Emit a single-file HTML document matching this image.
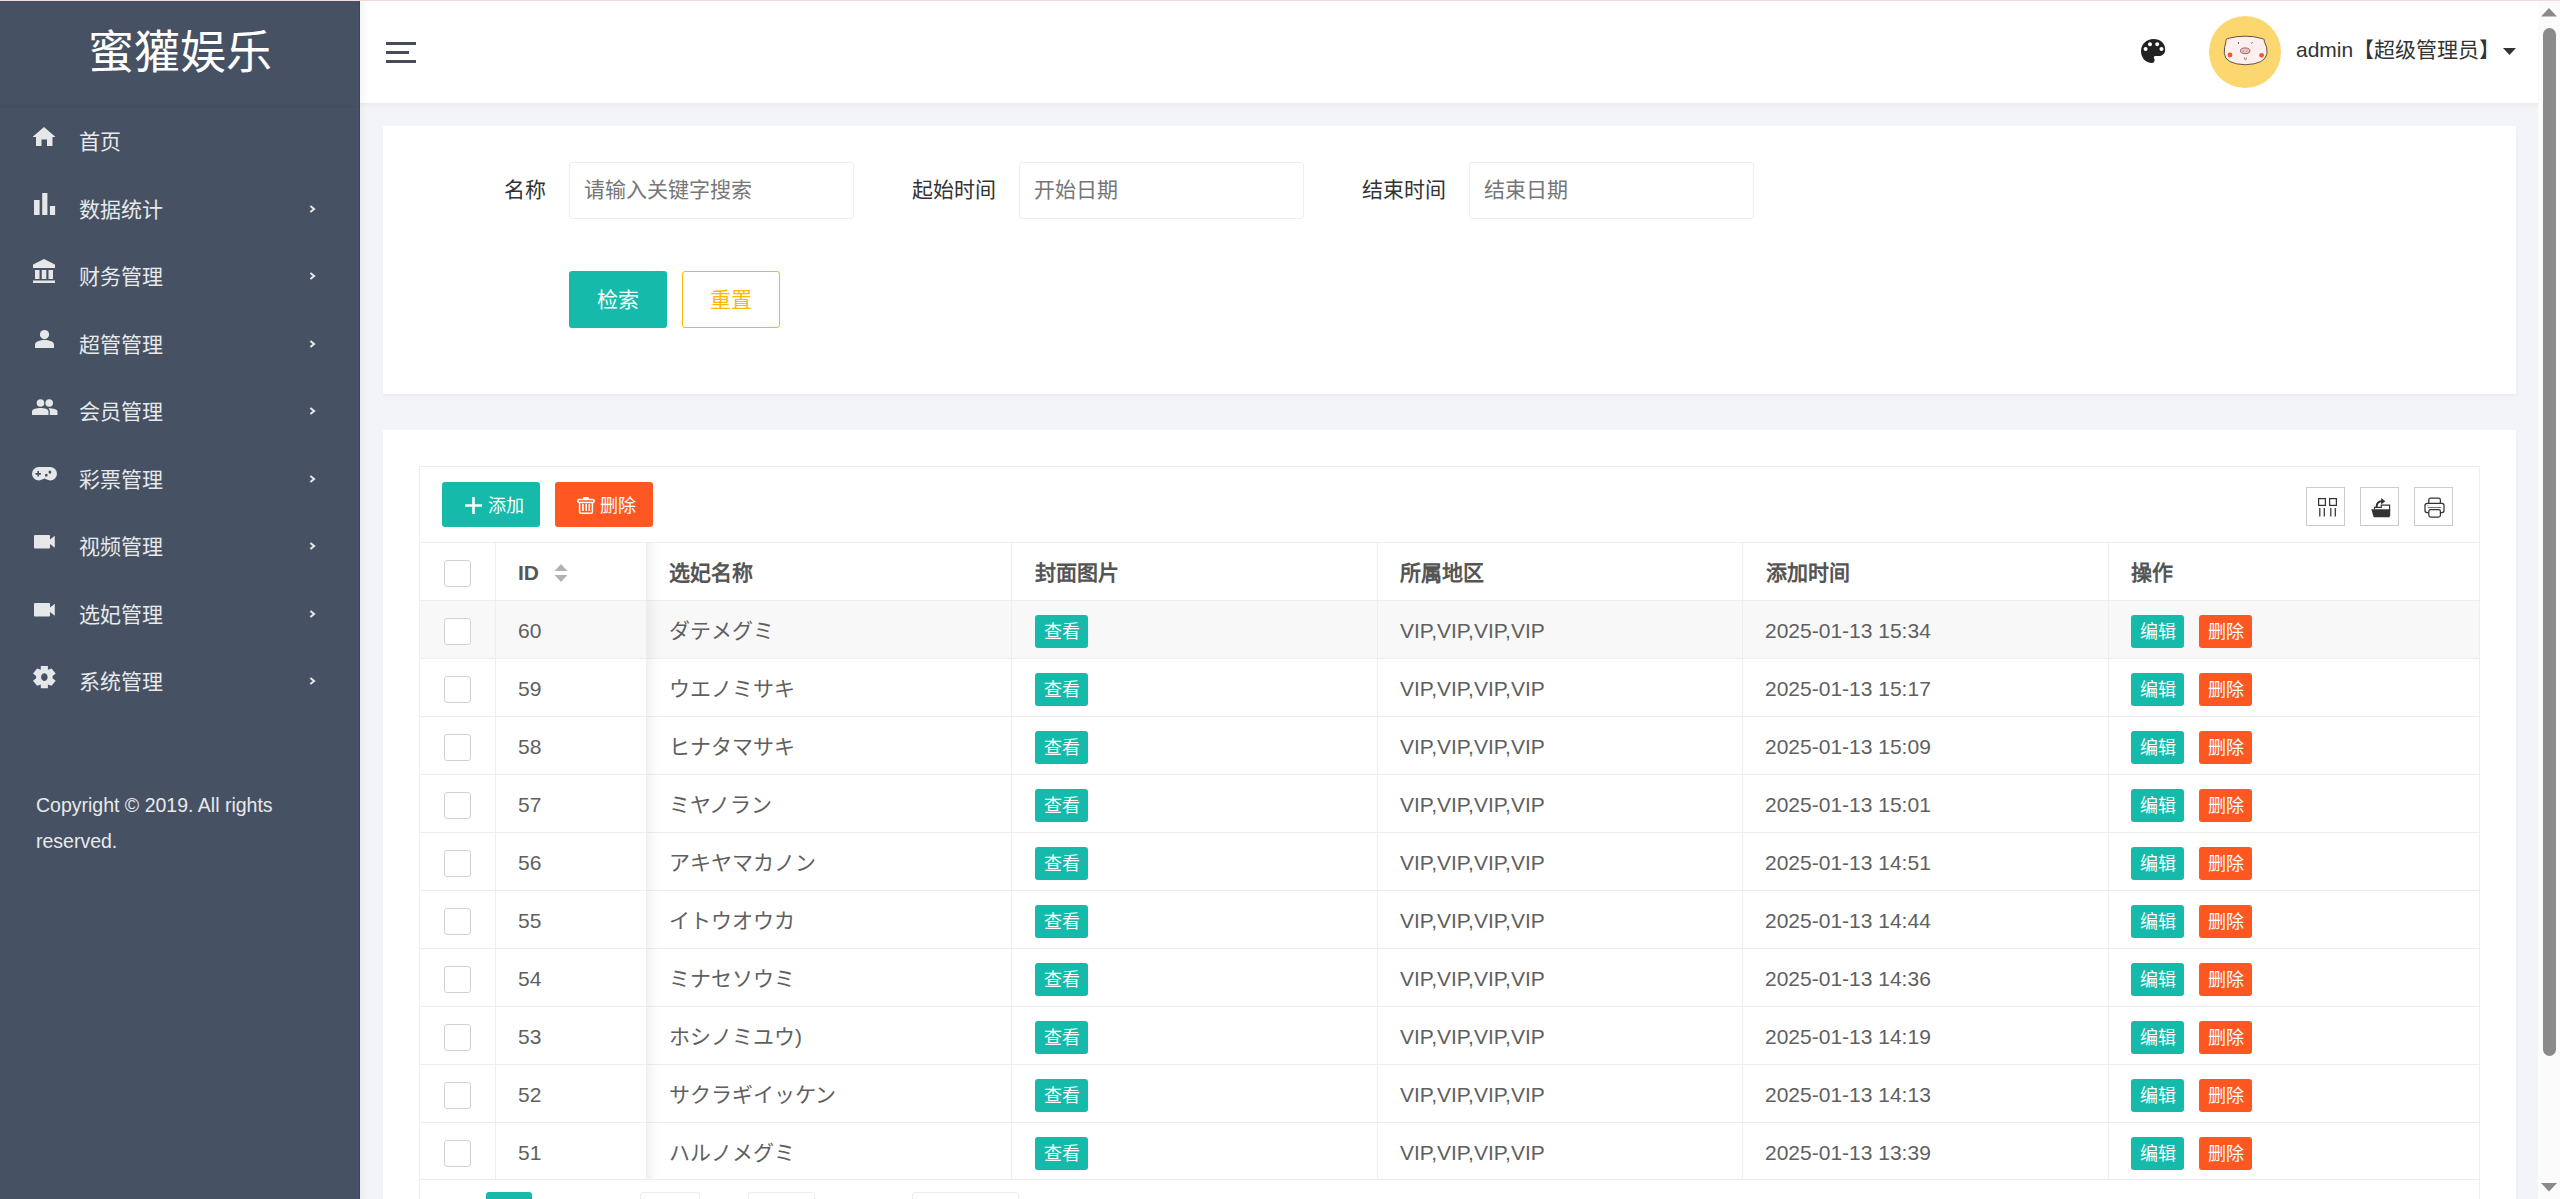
<!DOCTYPE html>
<html lang="zh-CN">
<head>
<meta charset="utf-8">
<title>蜜獾娱乐</title>
<style>
*{box-sizing:border-box;margin:0;padding:0}
html,body{width:2560px;height:1199px;overflow:hidden;background:#f2f4f8;font-family:"Liberation Sans",sans-serif;color:#333}
.abs{position:absolute}
.tx{font-size:21px;line-height:32px;color:#e8e9eb;white-space:nowrap}
.lbl{position:absolute;font-size:21px;line-height:30px;color:#333;white-space:nowrap}
.inp{position:absolute;width:285px;height:57px;border:1.5px solid #eee;border-radius:3px;background:#fff}
.inp span{position:absolute;left:14px;top:11.5px;font-size:21px;line-height:30px;color:#767676;white-space:nowrap}
.btn{position:absolute;height:57px;width:98px;border-radius:3px;text-align:center;font-size:21px;line-height:57px;color:#fff}
.tool{width:39px;height:39px;border:1.5px solid #ccc}
.th{height:57px;font-size:21px;line-height:59px;color:#555;font-weight:bold;white-space:nowrap}
.td{height:57px;font-size:21px;line-height:59px;color:#5f5f5f;white-space:nowrap}
.cb{width:27px;height:27px;border:1.5px solid #d2d2d2;border-radius:3px;background:#fff}
.sbtn{height:33px;width:53px;border-radius:3px;font-size:18px;line-height:35px;text-align:center;color:#fff}
</style>
</head>
<body>
<div class="abs" style="left:0;top:0;width:2560px;height:1px;background:#f2dadd;z-index:5"></div>
<!-- sidebar -->
<div class="abs" style="left:0;top:1px;width:360px;height:1198px;background:#465263;box-shadow:inset -1px 0 0 #3b4656"></div>
<div class="abs" style="left:0;top:106px;width:359px;height:1px;background:rgba(0,0,0,0.05)"></div>
<div class="abs" style="left:0;top:22px;width:360px;text-align:center;color:#fff;font-size:46px;line-height:60px">蜜獾娱乐</div>
<svg class="abs" style="left:31px;top:126.0px;width:26px;height:22px;overflow:visible" viewBox="0 0 26 22" fill="#e6e7e9"><path d="M11 0 L22.5 10 H19.5 V19 H14 V12.5 H8.5 V19 H3 V10 H-0.5 Z" transform="translate(2,1)"/></svg>
<div class="abs tx" style="left:79px;top:126.0px">首页</div>
<svg class="abs" style="left:33.8px;top:192.6px;width:22px;height:22px;overflow:visible" viewBox="0 0 22 22" fill="#e6e7e9"><path d="M0 7h5.6v15H0zM8.2 0h5.2v22H8.2zM15.9 13h5.2v9h-5.2z"/></svg>
<div class="abs tx" style="left:79px;top:193.5px">数据统计</div>
<svg class="abs" style="left:308px;top:203.5px;width:10px;height:12px" viewBox="0 0 10 12"><path d="M2.4 1.9 L6.1 5 L2.4 8.1" fill="none" stroke="#e6e7e9" stroke-width="2"/></svg>
<svg class="abs" style="left:31px;top:258.8px;width:26px;height:26px;overflow:visible" viewBox="0 0 26 26" fill="#e6e7e9"><path d="M11 0 L22 5.5 V9 H0 V5.5 Z M2 11h4.5v9H2z M8.8 11h4.5v9H8.8z M15.5 11h4.5v9h-4.5z M0 21.5h22V24H0z" transform="translate(2,0)"/></svg>
<div class="abs tx" style="left:79px;top:261.0px">财务管理</div>
<svg class="abs" style="left:308px;top:271.0px;width:10px;height:12px" viewBox="0 0 10 12"><path d="M2.4 1.9 L6.1 5 L2.4 8.1" fill="none" stroke="#e6e7e9" stroke-width="2"/></svg>
<svg class="abs" style="left:35px;top:330.0px;width:20px;height:19px;overflow:visible" viewBox="0 0 20 19" fill="#e6e7e9"><circle cx="9.5" cy="4.6" r="4.6"/><path d="M0 18 V14.5 C0 11.5 5 10 9.5 10 C14 10 19 11.5 19 14.5 V18 Z"/></svg>
<div class="abs tx" style="left:79px;top:328.5px">超管管理</div>
<svg class="abs" style="left:308px;top:338.5px;width:10px;height:12px" viewBox="0 0 10 12"><path d="M2.4 1.9 L6.1 5 L2.4 8.1" fill="none" stroke="#e6e7e9" stroke-width="2"/></svg>
<svg class="abs" style="left:31.6px;top:398.5px;width:26px;height:17px;overflow:visible" viewBox="0 0 26 17" fill="#e6e7e9"><circle cx="8.5" cy="4" r="3.8"/><circle cx="17.2" cy="4" r="3.8"/><path d="M0 16 V12.5 C0 10 4.5 9 8.5 9 C12.5 9 16.5 10 16.5 12.5 V16 Z M17.8 16 V12.5 C17.8 11 17.2 10 16.5 9.2 C21 9.2 25.5 10.2 25.5 12.5 V16 Z"/></svg>
<div class="abs tx" style="left:79px;top:396.0px">会员管理</div>
<svg class="abs" style="left:308px;top:406.0px;width:10px;height:12px" viewBox="0 0 10 12"><path d="M2.4 1.9 L6.1 5 L2.4 8.1" fill="none" stroke="#e6e7e9" stroke-width="2"/></svg>
<svg class="abs" style="left:32px;top:466.8px;width:26px;height:15px;overflow:visible" viewBox="0 0 26 15" fill="#e6e7e9"><path fill-rule="evenodd" d="M6.8 0 H18.2 A6.8 6.8 0 0 1 18.2 13.6 C16.5 13.6 14.8 12.4 12.5 11.6 C10.2 12.4 8.5 13.6 6.8 13.6 A6.8 6.8 0 0 1 6.8 0 Z M5.4 4.1 V6.1 H3.5 V7.7 H5.4 V9.6 H7 V7.7 H8.9 V6.1 H7 V4.1 Z M17.9 3.5 a1.4 1.6 0 1 0 0.01 0 Z M14.3 6.8 a1.4 1.4 0 1 0 0.01 0 Z"/></svg>
<div class="abs tx" style="left:79px;top:463.5px">彩票管理</div>
<svg class="abs" style="left:308px;top:473.5px;width:10px;height:12px" viewBox="0 0 10 12"><path d="M2.4 1.9 L6.1 5 L2.4 8.1" fill="none" stroke="#e6e7e9" stroke-width="2"/></svg>
<svg class="abs" style="left:34.2px;top:535.2px;width:22px;height:15px;overflow:visible" viewBox="0 0 22 15" fill="#e6e7e9"><path d="M0 1 Q0 0 1 0 H15 Q16 0 16 1 V4.5 L20.8 0.8 V12.7 L16 9 V12.5 Q16 13.5 15 13.5 H1 Q0 13.5 0 12.5 Z"/></svg>
<div class="abs tx" style="left:79px;top:531.0px">视频管理</div>
<svg class="abs" style="left:308px;top:541.0px;width:10px;height:12px" viewBox="0 0 10 12"><path d="M2.4 1.9 L6.1 5 L2.4 8.1" fill="none" stroke="#e6e7e9" stroke-width="2"/></svg>
<svg class="abs" style="left:34.2px;top:602.7px;width:22px;height:15px;overflow:visible" viewBox="0 0 22 15" fill="#e6e7e9"><path d="M0 1 Q0 0 1 0 H15 Q16 0 16 1 V4.5 L20.8 0.8 V12.7 L16 9 V12.5 Q16 13.5 15 13.5 H1 Q0 13.5 0 12.5 Z"/></svg>
<div class="abs tx" style="left:79px;top:598.5px">选妃管理</div>
<svg class="abs" style="left:308px;top:608.5px;width:10px;height:12px" viewBox="0 0 10 12"><path d="M2.4 1.9 L6.1 5 L2.4 8.1" fill="none" stroke="#e6e7e9" stroke-width="2"/></svg>
<svg class="abs" style="left:33px;top:665.7px;width:23px;height:23px;overflow:visible" viewBox="0 0 23 23" fill="#e6e7e9"><path fill-rule="evenodd" d="M7.8 0 H14.9 V3.8 L18.6 2.6 L22.7 7.5 L19.6 10 V12.3 L22.7 14.8 L18.6 19.7 L14.9 18.5 V22.3 H7.8 V18.5 L4.1 19.7 L0 14.8 L3.1 12.3 V10 L0 7.5 L4.1 2.6 L7.8 3.8 Z M11.35 7.35 A3.3 3.8 0 1 0 11.36 7.35 Z"/></svg>
<div class="abs tx" style="left:79px;top:666.0px">系统管理</div>
<svg class="abs" style="left:308px;top:676.0px;width:10px;height:12px" viewBox="0 0 10 12"><path d="M2.4 1.9 L6.1 5 L2.4 8.1" fill="none" stroke="#e6e7e9" stroke-width="2"/></svg>
<div class="abs" style="left:36px;top:787px;width:300px;font-size:19.5px;line-height:36px;color:#e8e9eb">Copyright © 2019. All rights reserved.</div>
<!-- header -->
<div class="abs" style="left:360px;top:1px;width:2178px;height:102px;background:#fff"></div>
<div class="abs" style="left:360px;top:1px;width:8px;height:102px;background:linear-gradient(to right,rgba(0,0,0,0.04),rgba(0,0,0,0))"></div>
<div class="abs" style="left:386px;top:42px;width:30px;height:3px;background:#464c57"></div>
<div class="abs" style="left:386px;top:51px;width:23px;height:3px;background:#464c57"></div>
<div class="abs" style="left:386px;top:60px;width:30px;height:3px;background:#464c57"></div>
<svg class="abs" style="left:2141px;top:39px;width:25px;height:24px" viewBox="0 0 25 24">
<path fill="#222" fill-rule="evenodd" d="M12.5 0 C19.5 0 24.5 4.5 24.2 11 C24 14.5 21.5 17 18 17 H14.5 C13 17 12.4 18.4 13.2 19.6 C14.2 21.2 13.5 24 11 24 C4.8 24 0 19 0 12 C0 5.2 5.5 0 12.5 0 Z M9 3.2 a2 2 0 1 0 0.01 0 Z M16.2 3.2 a2 2 0 1 0 0.01 0 Z M4.6 8 a2 2 0 1 0 0.01 0 Z M20.5 8 a2 2 0 1 0 0.01 0 Z"/>
</svg>
<svg class="abs" style="left:2209px;top:16px;width:72px;height:72px" viewBox="0 0 72 72">
<circle cx="36" cy="36" r="36" fill="#fcd770"/>
<path d="M17 25.8 Q16.3 22.3 20.3 22.2 Q27 20.2 36.2 20.2 Q45.5 20.2 51.8 22.3 Q55.8 22.2 55.4 25.6 Q58.6 31 58 37.5 Q56.5 48 36.2 48.8 Q16 48 15.3 37.5 Q15 31 17 25.8 Z" fill="#fcefee" stroke="#3a2a2a" stroke-width="0.8"/>
<path d="M18 24.5 Q18.5 23 20.5 23.3" fill="none" stroke="#f4c4c4" stroke-width="1"/>
<path d="M54.5 24.5 Q54 23 52 23.3" fill="none" stroke="#f4c4c4" stroke-width="1"/>
<circle cx="21" cy="39" r="2.4" fill="#f0592b"/>
<circle cx="52.6" cy="39.3" r="2.4" fill="#f0592b"/>
<ellipse cx="36.2" cy="34.8" rx="4.7" ry="2.9" fill="#f4bcbc" stroke="#3a2a2a" stroke-width="0.6"/>
<circle cx="34.6" cy="34.9" r="0.5" fill="#9a6a6a"/><circle cx="37.8" cy="34.9" r="0.5" fill="#9a6a6a"/>
<path d="M29.5 26.2 v1.6 M43.4 26.2 l-0.9 1.3" stroke="#333" stroke-width="0.9"/>
<path d="M35.4 41.5 Q35.6 44.2 36.4 44 Q37.2 44.2 37.4 41.5" fill="none" stroke="#333" stroke-width="0.55"/>
</svg>
<div class="abs" style="left:2296px;top:35px;font-size:21px;line-height:30px;color:#333;white-space:nowrap">admin【超级管理员】</div>
<svg class="abs" style="left:2503px;top:48px;width:13px;height:7px" viewBox="0 0 13 7"><path d="M0 0 H13 L6.5 7 Z" fill="#333"/></svg>
<!-- search card -->
<div class="abs" style="left:360px;top:103px;width:2178px;height:5px;background:linear-gradient(to bottom,rgba(0,0,0,0.035),rgba(0,0,0,0))"></div>
<div class="abs" style="left:360px;top:103px;width:7px;height:1096px;background:linear-gradient(to right,rgba(0,0,0,0.035),rgba(0,0,0,0))"></div>
<div class="abs" style="left:383px;top:126px;width:2133px;height:268px;background:#fff;box-shadow:0 1.5px 3px rgba(0,0,0,0.05)"></div>
<div class="lbl" style="left:504px;top:175px">名称</div>
<div class="inp" style="left:569px;top:162px"><span>请输入关键字搜索</span></div>
<div class="lbl" style="left:912px;top:175px">起始时间</div>
<div class="inp" style="left:1019px;top:162px"><span>开始日期</span></div>
<div class="lbl" style="left:1362px;top:175px">结束时间</div>
<div class="inp" style="left:1469px;top:162px"><span>结束日期</span></div>
<div class="btn" style="left:569px;top:271px;background:#16baaa">检索</div>
<div class="btn" style="left:682px;top:271px;background:#fff;border:1.5px solid #ffb800;color:#ffb800;line-height:56px">重置</div>
<!-- table card -->
<div class="abs" style="left:383px;top:430px;width:2133px;height:800px;background:#fff;box-shadow:0 1.5px 3px rgba(0,0,0,0.05)"></div>
<div class="abs" style="left:419px;top:466px;width:2061px;height:800px;border:1px solid #eee"></div>
<div class="abs" style="left:442px;top:482px;width:98px;height:45px;background:#16baaa;border-radius:3px"></div>
<svg class="abs" style="left:465px;top:497px;width:17px;height:17px" viewBox="0 0 17 17"><path d="M8.5 0v17M0 8.5h17" stroke="#fff" stroke-width="2.6"/></svg>
<div class="abs" style="left:488px;top:490.5px;font-size:18px;line-height:30px;color:#fff">添加</div>
<div class="abs" style="left:555px;top:482px;width:98px;height:45px;background:#ff5722;border-radius:3px"></div>
<svg class="abs" style="left:577px;top:497px;width:18px;height:17px" viewBox="0 0 18 17"><rect x="6" y="0.1" width="6" height="2.6" rx="1" fill="#fff"/><rect x="0.8" y="2.4" width="16.4" height="3" rx="1.5" fill="none" stroke="#fff" stroke-width="1.5"/><path d="M2.6 5.2 V14.8 Q2.6 16.3 4.1 16.3 H13.9 Q15.4 16.3 15.4 14.8 V5.2" fill="none" stroke="#fff" stroke-width="1.5"/><path d="M5.1 7h1.6v7H5.1zM8.4 7h1.6v7H8.4zM11.5 7h1.6v7h-1.6z" fill="#fff"/></svg>
<div class="abs" style="left:600px;top:490.5px;font-size:18px;line-height:30px;color:#fff">删除</div>

<div class="abs tool" style="left:2306px;top:487px"></div>
<div class="abs tool" style="left:2360px;top:487px"></div>
<div class="abs tool" style="left:2414px;top:487px"></div>
<svg class="abs" style="left:2317px;top:497px;width:20px;height:21px" viewBox="0 0 20 21" fill="none" stroke="#333" stroke-width="1.25">
<rect x="1.6" y="1.6" width="6.8" height="6.8"/><rect x="12.6" y="1.6" width="6.8" height="6.8"/>
<path d="M2.8 11v8.4M7.3 11v8.4M13.8 11v8.4M18.3 11v8.4"/>
</svg>
<svg class="abs" style="left:2371px;top:497px;width:21px;height:21px" viewBox="0 0 21 21">
<path d="M0.3 12.2 H19.2 L18.6 20.2 H2.7 Z" fill="#333"/>
<path d="M3.5 12.2 V10.3 H10.3 V8.2 H18.6 V19" fill="none" stroke="#333" stroke-width="1.2"/>
<path d="M5.6 10 C5.6 6 8 4.2 11 4.2" fill="none" stroke="#333" stroke-width="1.9"/>
<path d="M10.2 1 L14.3 4.2 L10.2 7.4 Z" fill="#333"/>
</svg>
<svg class="abs" style="left:2424px;top:497px;width:21px;height:21px" viewBox="0 0 21 21" fill="none" stroke="#333" stroke-width="1.25">
<path d="M4.8 6.4 V3 Q4.8 1.2 6.6 1.2 H14.6 Q16.4 1.2 16.4 3 V6.4"/>
<path d="M4.8 15.5 H3 Q1 15.5 1 13.5 V8.6 Q1 6.4 3.2 6.4 H18 Q20 6.4 20 8.6 V13.5 Q20 15.5 18 15.5 H16.4"/>
<rect x="4.8" y="12.6" width="11.6" height="7.4" rx="1.8"/>
<path d="M3.8 10.5 H16.8" stroke-width="0.7"/>
<path d="M2.8 8.7 H5.3" stroke-width="0.6" stroke="#6a9ad8"/>
</svg>

<div class="abs" style="left:419px;top:542px;width:2061px;height:1px;background:#eee"></div>
<div class="abs cb" style="left:444px;top:560px"></div>
<div class="abs th" style="left:518px;top:543px">ID</div>
<svg class="abs" style="left:554px;top:564px;width:14px;height:18px" viewBox="0 0 14 18" fill="#b2b2b2"><path d="M7 0 L13.5 7 H0.5 Z M0.5 11 H13.5 L7 18 Z"/></svg>
<div class="abs th" style="left:669px;top:543px">选妃名称</div>
<div class="abs th" style="left:1035px;top:543px">封面图片</div>
<div class="abs th" style="left:1400px;top:543px">所属地区</div>
<div class="abs th" style="left:1766px;top:543px">添加时间</div>
<div class="abs th" style="left:2131px;top:543px">操作</div>
<div class="abs" style="left:419px;top:600px;width:2061px;height:1px;background:#eee"></div>
<div class="abs" style="left:420px;top:601px;width:2059px;height:57px;background:#f8f8f8"></div>
<div class="abs" style="left:419px;top:658px;width:2061px;height:1px;background:#eee"></div>
<div class="abs cb" style="left:444px;top:618px"></div>
<div class="abs td" style="left:518px;top:601px">60</div>
<div class="abs td jp" style="left:669px;top:601px">ダテメグミ</div>
<div class="abs sbtn" style="left:1035px;top:615px;background:#16baaa">查看</div>
<div class="abs td" style="left:1400px;top:601px">VIP,VIP,VIP,VIP</div>
<div class="abs td" style="left:1765px;top:601px">2025-01-13 15:34</div>
<div class="abs sbtn" style="left:2131px;top:615px;background:#16baaa">编辑</div>
<div class="abs sbtn" style="left:2199px;top:615px;background:#ff5722">删除</div>
<div class="abs" style="left:419px;top:716px;width:2061px;height:1px;background:#eee"></div>
<div class="abs cb" style="left:444px;top:676px"></div>
<div class="abs td" style="left:518px;top:659px">59</div>
<div class="abs td jp" style="left:669px;top:659px">ウエノミサキ</div>
<div class="abs sbtn" style="left:1035px;top:673px;background:#16baaa">查看</div>
<div class="abs td" style="left:1400px;top:659px">VIP,VIP,VIP,VIP</div>
<div class="abs td" style="left:1765px;top:659px">2025-01-13 15:17</div>
<div class="abs sbtn" style="left:2131px;top:673px;background:#16baaa">编辑</div>
<div class="abs sbtn" style="left:2199px;top:673px;background:#ff5722">删除</div>
<div class="abs" style="left:419px;top:774px;width:2061px;height:1px;background:#eee"></div>
<div class="abs cb" style="left:444px;top:734px"></div>
<div class="abs td" style="left:518px;top:717px">58</div>
<div class="abs td jp" style="left:669px;top:717px">ヒナタマサキ</div>
<div class="abs sbtn" style="left:1035px;top:731px;background:#16baaa">查看</div>
<div class="abs td" style="left:1400px;top:717px">VIP,VIP,VIP,VIP</div>
<div class="abs td" style="left:1765px;top:717px">2025-01-13 15:09</div>
<div class="abs sbtn" style="left:2131px;top:731px;background:#16baaa">编辑</div>
<div class="abs sbtn" style="left:2199px;top:731px;background:#ff5722">删除</div>
<div class="abs" style="left:419px;top:832px;width:2061px;height:1px;background:#eee"></div>
<div class="abs cb" style="left:444px;top:792px"></div>
<div class="abs td" style="left:518px;top:775px">57</div>
<div class="abs td jp" style="left:669px;top:775px">ミヤノラン</div>
<div class="abs sbtn" style="left:1035px;top:789px;background:#16baaa">查看</div>
<div class="abs td" style="left:1400px;top:775px">VIP,VIP,VIP,VIP</div>
<div class="abs td" style="left:1765px;top:775px">2025-01-13 15:01</div>
<div class="abs sbtn" style="left:2131px;top:789px;background:#16baaa">编辑</div>
<div class="abs sbtn" style="left:2199px;top:789px;background:#ff5722">删除</div>
<div class="abs" style="left:419px;top:890px;width:2061px;height:1px;background:#eee"></div>
<div class="abs cb" style="left:444px;top:850px"></div>
<div class="abs td" style="left:518px;top:833px">56</div>
<div class="abs td jp" style="left:669px;top:833px">アキヤマカノン</div>
<div class="abs sbtn" style="left:1035px;top:847px;background:#16baaa">查看</div>
<div class="abs td" style="left:1400px;top:833px">VIP,VIP,VIP,VIP</div>
<div class="abs td" style="left:1765px;top:833px">2025-01-13 14:51</div>
<div class="abs sbtn" style="left:2131px;top:847px;background:#16baaa">编辑</div>
<div class="abs sbtn" style="left:2199px;top:847px;background:#ff5722">删除</div>
<div class="abs" style="left:419px;top:948px;width:2061px;height:1px;background:#eee"></div>
<div class="abs cb" style="left:444px;top:908px"></div>
<div class="abs td" style="left:518px;top:891px">55</div>
<div class="abs td jp" style="left:669px;top:891px">イトウオウカ</div>
<div class="abs sbtn" style="left:1035px;top:905px;background:#16baaa">查看</div>
<div class="abs td" style="left:1400px;top:891px">VIP,VIP,VIP,VIP</div>
<div class="abs td" style="left:1765px;top:891px">2025-01-13 14:44</div>
<div class="abs sbtn" style="left:2131px;top:905px;background:#16baaa">编辑</div>
<div class="abs sbtn" style="left:2199px;top:905px;background:#ff5722">删除</div>
<div class="abs" style="left:419px;top:1006px;width:2061px;height:1px;background:#eee"></div>
<div class="abs cb" style="left:444px;top:966px"></div>
<div class="abs td" style="left:518px;top:949px">54</div>
<div class="abs td jp" style="left:669px;top:949px">ミナセソウミ</div>
<div class="abs sbtn" style="left:1035px;top:963px;background:#16baaa">查看</div>
<div class="abs td" style="left:1400px;top:949px">VIP,VIP,VIP,VIP</div>
<div class="abs td" style="left:1765px;top:949px">2025-01-13 14:36</div>
<div class="abs sbtn" style="left:2131px;top:963px;background:#16baaa">编辑</div>
<div class="abs sbtn" style="left:2199px;top:963px;background:#ff5722">删除</div>
<div class="abs" style="left:419px;top:1064px;width:2061px;height:1px;background:#eee"></div>
<div class="abs cb" style="left:444px;top:1024px"></div>
<div class="abs td" style="left:518px;top:1007px">53</div>
<div class="abs td jp" style="left:669px;top:1007px">ホシノミユウ)</div>
<div class="abs sbtn" style="left:1035px;top:1021px;background:#16baaa">查看</div>
<div class="abs td" style="left:1400px;top:1007px">VIP,VIP,VIP,VIP</div>
<div class="abs td" style="left:1765px;top:1007px">2025-01-13 14:19</div>
<div class="abs sbtn" style="left:2131px;top:1021px;background:#16baaa">编辑</div>
<div class="abs sbtn" style="left:2199px;top:1021px;background:#ff5722">删除</div>
<div class="abs" style="left:419px;top:1122px;width:2061px;height:1px;background:#eee"></div>
<div class="abs cb" style="left:444px;top:1082px"></div>
<div class="abs td" style="left:518px;top:1065px">52</div>
<div class="abs td jp" style="left:669px;top:1065px">サクラギイッケン</div>
<div class="abs sbtn" style="left:1035px;top:1079px;background:#16baaa">查看</div>
<div class="abs td" style="left:1400px;top:1065px">VIP,VIP,VIP,VIP</div>
<div class="abs td" style="left:1765px;top:1065px">2025-01-13 14:13</div>
<div class="abs sbtn" style="left:2131px;top:1079px;background:#16baaa">编辑</div>
<div class="abs sbtn" style="left:2199px;top:1079px;background:#ff5722">删除</div>
<div class="abs" style="left:419px;top:1179px;width:2061px;height:1px;background:#eee"></div>
<div class="abs cb" style="left:444px;top:1140px"></div>
<div class="abs td" style="left:518px;top:1123px">51</div>
<div class="abs td jp" style="left:669px;top:1123px">ハルノメグミ</div>
<div class="abs sbtn" style="left:1035px;top:1137px;background:#16baaa">查看</div>
<div class="abs td" style="left:1400px;top:1123px">VIP,VIP,VIP,VIP</div>
<div class="abs td" style="left:1765px;top:1123px">2025-01-13 13:39</div>
<div class="abs sbtn" style="left:2131px;top:1137px;background:#16baaa">编辑</div>
<div class="abs sbtn" style="left:2199px;top:1137px;background:#ff5722">删除</div>
<div class="abs" style="left:495px;top:543px;width:1px;height:636px;background:#eee"></div>
<div class="abs" style="left:646px;top:543px;width:1px;height:636px;background:#eee"></div>
<div class="abs" style="left:1011px;top:543px;width:1px;height:636px;background:#eee"></div>
<div class="abs" style="left:1377px;top:543px;width:1px;height:636px;background:#eee"></div>
<div class="abs" style="left:1742px;top:543px;width:1px;height:636px;background:#eee"></div>
<div class="abs" style="left:2108px;top:543px;width:1px;height:636px;background:#eee"></div>
<div class="abs" style="left:647px;top:543px;width:14px;height:636px;background:linear-gradient(to right,rgba(0,0,0,0.05),rgba(0,0,0,0.012) 60%,rgba(0,0,0,0))"></div>
<div class="abs" style="left:486px;top:1192px;width:46px;height:20px;background:#16baaa;border-radius:3px"></div>
<div class="abs" style="left:640px;top:1192px;width:60px;height:30px;border:1.5px solid #eee;border-radius:3px"></div>
<div class="abs" style="left:748px;top:1192px;width:67px;height:30px;border:1.5px solid #eee;border-radius:3px"></div>
<div class="abs" style="left:912px;top:1192px;width:107px;height:30px;border:1.5px solid #eee;border-radius:3px"></div>
<!-- scrollbar -->
<div class="abs" style="left:2538px;top:1px;width:22px;height:1198px;background:#fbfbfb"></div>
<svg class="abs" style="left:2541px;top:8px;width:16px;height:9px" viewBox="0 0 16 9"><path d="M8 0 L16 8.5 H0 Z" fill="#8a8a8a"/></svg>
<div class="abs" style="left:2543px;top:28px;width:13px;height:1028px;background:#8a8a8a;border-radius:6.5px"></div>
<svg class="abs" style="left:2541px;top:1183px;width:16px;height:9px" viewBox="0 0 16 9"><path d="M0 0 H16 L8 8.5 Z" fill="#8a8a8a"/></svg>
</body>
</html>
